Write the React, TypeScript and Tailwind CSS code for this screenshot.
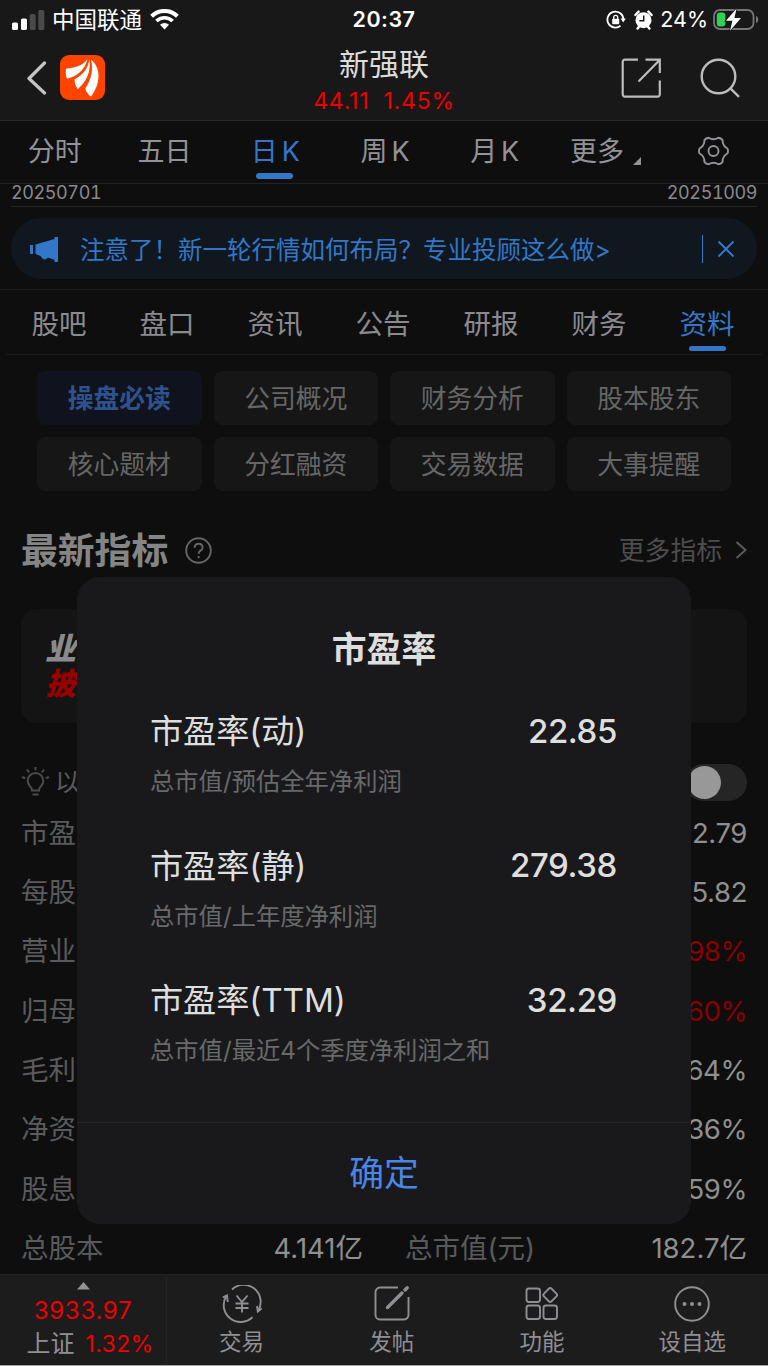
import { useState } from "react";
import clsx from "clsx";

const kTabs = ["分时", "五日", "日K", "周K", "月K"];
const infoTabs = ["股吧", "盘口", "资讯", "公告", "研报", "财务", "资料"];
const chips = [
  "操盘必读", "公司概况", "财务分析", "股本股东",
  "核心题材", "分红融资", "交易数据", "大事提醒",
];

const metrics = [
  { label: "市盈率", value: "2.79" },
  { label: "每股", value: "5.82" },
  { label: "营业", value: "98%", up: true },
  { label: "归母", value: "60%", up: true },
  { label: "毛利", value: "64%" },
  { label: "净资", value: "36%" },
  { label: "股息", value: "59%" },
];

const ratios = [
  { name: "市盈率(动)", value: "22.85", note: "总市值/预估全年净利润" },
  { name: "市盈率(静)", value: "279.38", note: "总市值/上年度净利润" },
  { name: "市盈率(TTM)", value: "32.29", note: "总市值/最近4个季度净利润之和" },
];

function StatusBar() {
  return (
    <div className="relative flex h-10 items-center justify-between pl-3 pr-[9px] text-white">
      <div className="flex items-center">
        <svg width="33" height="21" viewBox="0 0 33 21">
          <rect x="0" y="12.5" width="6" height="7.5" rx="1.6" fill="#fff" />
          <rect x="9" y="8.5" width="6" height="11.5" rx="1.6" fill="#fff" />
          <rect x="17.7" y="4" width="6" height="16" rx="1.6" fill="#4a4a4a" />
          <rect x="26.3" y="0" width="6" height="20" rx="1.6" fill="#4a4a4a" />
        </svg>
        <span className="ml-[7px] text-[22.5px] leading-none">中国联通</span>
        <svg className="ml-2 mb-0.5" width="29" height="21" viewBox="0 0 29 21" fill="none" stroke="#fff">
          <path d="M1.6 7.2a18.4 18.4 0 0 1 25.8 0" strokeWidth="4" />
          <path d="M6.4 12a11.6 11.6 0 0 1 16.2 0" strokeWidth="3.6" />
          <path d="M10 15.8a6.6 6.6 0 0 1 9 0L14.5 20.4z" fill="#fff" stroke="none" />
        </svg>
      </div>
      <div className="absolute inset-x-0 text-center text-[21.5px] leading-none font-semibold tracking-[0.5px]">20:37</div>
      <div className="flex items-center">
        <svg width="20" height="20" viewBox="0 0 20 20" fill="none" stroke="#fff" strokeWidth="1.8">
          <path d="M17.4 9A8 8 0 1 0 14.5 15.8" />
          <path d="M14.6 8.4h5.2l-2.6 4z" fill="#fff" stroke="none" />
          <rect x="6.2" y="8.8" width="7" height="5.4" rx="0.8" fill="#fff" stroke="none" />
          <path d="M7.7 9V7.4a2 2 0 0 1 4 0V9" strokeWidth="1.3" />
        </svg>
        <svg className="ml-2" width="19" height="20" viewBox="0 0 19 20">
          <path d="M1.4 5 4.6 1.6M17.6 5 14.4 1.6M3.6 18.6l2-2.6M15.4 18.6l-2-2.6" stroke="#fff" strokeWidth="2.4" strokeLinecap="round" />
          <circle cx="9.5" cy="10.2" r="8" fill="#fff" />
          <path d="M9.7 5.4v5.4H5.4" fill="none" stroke="#181818" strokeWidth="1.5" />
        </svg>
        <span className="ml-[7px] text-[21.5px] leading-none">24%</span>
        <svg className="ml-[5px]" width="46" height="24" viewBox="0 0 46 24">
          <rect x="1" y="2" width="39.5" height="19" rx="6" fill="none" stroke="#777" strokeWidth="1.8" />
          <path d="M43 8v7c3-1 3-6 0-7z" fill="#777" />
          <rect x="3.8" y="4.5" width="8.6" height="14" rx="3" fill="#30d158" />
          <path d="M23.6 0.5 13 12.8h6.4L17 22.8 28 10h-6.6z" fill="#fff" stroke="#181818" strokeWidth="1.6" paintOrder="stroke" />
        </svg>
      </div>
    </div>
  );
}

function NavBar() {
  return (
    <div className="flex h-[81px] items-center justify-between border-b border-[#292929] px-[27px]">
      <div className="flex w-[200px] items-center">
        <svg className="mb-1" width="20" height="34" viewBox="0 0 20 34" fill="none" stroke="#c4c4c4" strokeWidth="3.2" strokeLinecap="round" strokeLinejoin="round">
          <path d="M17.5 2 2 17.5 17.5 32" />
        </svg>
        <div className="mb-[5px] ml-[13px] size-[45px] rounded-[9px] bg-[#ff4400]">
          <svg width="45" height="45" viewBox="0 0 45 45" fill="#fff">
            <path d="M27.5 4.2C21.5 11.5 14 12.5 6 13.8C5.5 17 5.7 20.5 7 23.8C16 21.5 24.5 16 27.5 4.2z" />
            <path d="M29.2 4.3C28.5 13 23 20 14.6 24.3C14.5 28 15.5 31 17.8 34.2C26 27 31.5 17 29.2 4.3z" />
            <path d="M31 4.3C33.5 15 31.5 24 25.3 33.5C26 37 28 39.5 31 41.5C40 30 42 14 31 4.3z" />
          </svg>
        </div>
      </div>
      <div className="flex flex-col items-center">
        <div className="mb-[9px] text-[30px] leading-8 text-[#dcdcdc]">新强联</div>
        <div className="flex gap-[14px] text-[23px] leading-6 tracking-[0.8px] text-[#ee0000]">
          <span>44.11</span>
          <span>1.45%</span>
        </div>
      </div>
      <div className="flex w-[200px] items-center justify-end gap-[38px] pb-[3px]">
        <svg width="41" height="41" viewBox="0 0 41 41" fill="none" stroke="#bcbcbc" strokeWidth="2.2">
          <path d="M17 1.7H4A2.2 2.2 0 0 0 1.7 4V36.3A2.2 2.2 0 0 0 4 38.6H36.5A2.2 2.2 0 0 0 38.8 36.3V22.5" />
          <path d="M24.5 1.7H38.8V15M38.4 2.2 17.5 23.5" />
        </svg>
        <svg width="41" height="41" viewBox="0 0 41 41" fill="none" stroke="#bcbcbc" strokeWidth="2.4">
          <circle cx="18.5" cy="18.5" r="16.8" />
          <path d="M30.2 30.2 39 38.8" />
        </svg>
      </div>
    </div>
  );
}

function PeriodTabs() {
  return (
    <div className="grid h-[63px] grid-cols-7 border-b border-[#222] text-[27px] leading-none text-[#929297]">
      {kTabs.map((t) => {
        const active = t === "日K";
        return (
          <div key={t} className={clsx("relative flex items-center justify-center pb-0.5", active && "text-[#3277c8]")}>
            <span className={clsx(t.endsWith("K") && "pl-1.5 tracking-[4px]")}>{t}</span>
            {active && <span className="absolute bottom-[4.5px] h-1.5 w-[37px] rounded-full bg-[#3277c8]" />}
          </div>
        );
      })}
      <div className="flex items-center justify-center pb-0.5 pl-1">
        更多
        <svg className="ml-[9px] mt-[19px]" width="8" height="8" viewBox="0 0 8 8" fill="#929297"><path d="M8 0v8H0z" /></svg>
      </div>
      <div className="flex items-center justify-center pb-[3px]">
        <svg width="31" height="30" viewBox="0 0 31 30" fill="none" stroke="#929297" strokeWidth="1.9" strokeLinejoin="round">
          <path d="M29.5 17.5Q24.4 20.15 24.6 25.9Q23 28 20.4 28.3Q15.5 25.3 10.6 28.3Q8 28 6.4 25.9Q6.6 20.15 1.5 17.5Q.5 15 1.5 12.5Q6.6 9.85 6.4 4.1Q8 2 10.6 1.7Q15.5 4.7 20.4 1.7Q23 2 24.6 4.1Q24.4 9.85 29.5 12.5Q30.5 15 29.5 17.5z" />
          <circle cx="15.5" cy="15" r="5" />
        </svg>
      </div>
    </div>
  );
}

function Banner() {
  return (
    <div className="mx-[11px] mt-[11px] flex h-[61px] items-center rounded-full bg-[#10171f] text-[#3277c8]">
      <svg className="ml-[19px]" width="28" height="26" viewBox="0 0 28 26" fill="#3277c8">
        <path d="M0 9h3v9H0zM5.5 8.5 24.5 3V1H28v25h-3.5v-2L18 21.5q-4 4.5-7.5-1.5l-5-2z" />
      </svg>
      <span className="ml-[22px] flex-1 pt-[3px] text-[24.5px] leading-none">注意了！新一轮行情如何布局？专业投顾这么做&gt;</span>
      <span className="mr-[14px] h-7 w-px bg-[#3277c8]" />
      <svg className="mr-[22px]" width="18" height="18" viewBox="0 0 18 18" stroke="#3277c8" strokeWidth="2">
        <path d="M1.5 1.5l15 15M16.5 1.5l-15 15" />
      </svg>
    </div>
  );
}

function InfoTabs() {
  return (
    <div className="mt-[10px] border-t border-[#1b1b1d]">
      <div className="mx-1.5 grid h-[65px] grid-cols-7 border-b border-[#1b1b1d] text-[27.5px] leading-none text-[#8b8b8f]">
        {infoTabs.map((t) => (
          <div key={t} className={clsx("relative flex items-center justify-center pt-1.5 pr-0.5", t === "资料" && "text-[#3277c8]")}>
            {t}
            {t === "资料" && <span className="absolute bottom-[3px] h-[5px] w-[37px] rounded-full bg-[#3277c8]" />}
          </div>
        ))}
      </div>
    </div>
  );
}

function MetricRows() {
  return (
    <div className="-mb-2 shrink-0 px-[21px] text-[27.5px] leading-none">
      {metrics.map((m) => (
        <div key={m.label} className="flex h-[59.3px] items-center justify-between">
          <span className="text-[#5a5a5c]">{m.label}</span>
          <span className={clsx("tracking-[-0.4px]", m.up ? "text-[#8a0000]" : "text-[#8f8f8f]")}>{m.value}</span>
        </div>
      ))}
      <div className="grid h-[59.3px] grid-cols-2 items-center gap-[42px]">
        <div className="flex justify-between">
          <span className="text-[#5a5a5c]">总股本</span>
          <span className="text-[#8f8f8f]">4.141亿</span>
        </div>
        <div className="flex justify-between">
          <span className="text-[#5a5a5c]">总市值(元)</span>
          <span className="text-[#8f8f8f]">182.7亿</span>
        </div>
      </div>
    </div>
  );
}

function BottomBar() {
  const items = [
    {
      label: "交易",
      icon: (
        <>
          <path d="M10 4.5A17 17 0 0 1 36.3 25.5M30.5 32.3A17 17 0 0 1 4.2 11.2" />
          <path d="M.8 12.3 5 10.5 5.7 17M39.8 23.5 35.8 26.5 35 21" />
          <path d="M14.5 10.5 20 17l5.5-6.5M20 17v10.5M13.5 18.5h13M13.5 23h13" />
        </>
      ),
    },
    {
      label: "发帖",
      icon: (
        <>
          <path d="M26 2.5H8A4.5 4.5 0 0 0 3.5 7V30A4.5 4.5 0 0 0 8 34.5H32A4.5 4.5 0 0 0 36.5 30V12" />
          <path d="M15.5 22.5 30 8M33 5 35.2 2.8" strokeWidth="3.4" strokeLinecap="round" />
        </>
      ),
    },
    {
      label: "功能",
      icon: (
        <>
          <rect x="4.5" y="3.5" width="13.5" height="13.5" rx="2.5" />
          <rect x="4.5" y="20.5" width="13.5" height="13.5" rx="2.5" />
          <rect x="21.5" y="20.5" width="13.5" height="13.5" rx="2.5" />
          <rect x="22.8" y="4.6" width="10.8" height="10.8" rx="2" transform="rotate(45 28.2 10)" />
        </>
      ),
    },
    {
      label: "设自选",
      icon: (
        <>
          <circle cx="20" cy="19" r="16.8" />
          <path d="M12.5 19h.01M20 19h.01M27.5 19h.01" strokeWidth="4" strokeLinecap="round" />
        </>
      ),
    },
  ];

  return (
    <div className="relative flex h-[92px] border-t border-b border-t-[#232323] border-b-[#a5a5a5] bg-[#1c1c1c] text-[#8f8f94]">
      <div className="flex w-[167px] flex-col items-center border-r border-[#232325] pt-[7px]">
        <svg width="13" height="8" viewBox="0 0 13 8" fill="#929297"><path d="M6.5 0 13 7.5H0z" /></svg>
        <div className="mt-2 text-[24px] leading-[26px] tracking-[0.7px] text-[#ee0000]">3933.97</div>
        <div className="mt-[7px] flex items-center gap-[11px] pl-3.5 text-[24px] leading-[26px]">
          上证<span className="text-[23px] tracking-[0.4px] text-[#ee0000]">1.32%</span>
        </div>
      </div>
      {items.map((item) => (
        <div key={item.label} className="flex flex-1 flex-col items-center pt-2.5 pr-px text-[22.5px]">
          <svg width="40" height="38" viewBox="0 0 40 38" fill="none" stroke="#8f8f94" strokeWidth="1.9">
            {item.icon}
          </svg>
          <span className="mt-1.5 leading-[26px]">{item.label}</span>
        </div>
      ))}
    </div>
  );
}

function RatioDialog({ onClose }: { onClose: () => void }) {
  return (
    <div className="absolute left-[77px] top-[577px] flex h-[647px] w-[614px] flex-col rounded-[23px] bg-[#19191b]">
      <h2 className="mt-[54px] text-center text-[34.8px] leading-9 font-bold text-[#dedede]">市盈率</h2>
      <div className="flex-1 px-[73px] pt-[47px]">
        {ratios.map((r) => (
          <div key={r.name} className="h-[134.5px]">
            <div className="flex h-9 items-center justify-between leading-none text-[#dedede]">
              <span className="text-[33.2px] tracking-[-0.1px]">{r.name}</span>
              <span className="pr-px pb-0.5 text-[33px] font-medium tracking-[-0.4px]">{r.value}</span>
            </div>
            <div className="mt-[17px] text-[24.3px] leading-7 text-[#69696a]">{r.note}</div>
          </div>
        ))}
      </div>
      <button onClick={onClose} className="h-[102px] border-t border-[#252527] text-[34.8px] leading-none text-[#4a86e8]">
        确定
      </button>
    </div>
  );
}

export default function App() {
  const [open, setOpen] = useState(true);

  return (
    <div className="relative flex h-[1366px] w-[768px] flex-col overflow-hidden bg-[#0e0e0f] font-['Inter','Noto_Sans_CJK_SC',sans-serif]">
      <div className="bg-[#181818]">
        <StatusBar />
        <NavBar />
      </div>
      <PeriodTabs />

      {/* Chart date range */}
      <div className="mx-[11px] flex h-[23px] justify-between border-b border-[#222] text-[18px] leading-[17px] tracking-[-0.4px] tabular-nums text-[#89898d]">
        <span>20250701</span>
        <span>20251009</span>
      </div>

      <Banner />
      <InfoTabs />

      <div className="ml-[37px] mt-4 grid w-[694px] grid-cols-4 gap-3">
        {chips.map((c, i) => (
          <div
            key={c}
            className={clsx(
              "flex h-[54px] items-center justify-center rounded-lg pt-0.5 text-[25.8px] leading-none",
              i === 0 ? "bg-[#10131d] font-bold text-[#2d528e]" : "bg-[#161617] text-[#666]"
            )}
          >
            {c}
          </div>
        ))}
      </div>

      {/* Section heading */}
      <div className="mt-[37px] flex h-11 items-center px-[21px]">
        <h1 className="pt-0.5 text-[36.8px] leading-none font-bold text-[#858585]">最新指标</h1>
        <svg className="ml-[17px]" width="27" height="27" viewBox="0 0 27 27" fill="none" stroke="#666" strokeWidth="1.9">
          <circle cx="13.5" cy="13.5" r="12.3" />
          <path d="M9.6 10.7q.3-4 4-4t4 3.5q0 2-2.1 3.4-1.9 1.3-1.9 3.2" />
          <path d="M13.6 19v2.2" />
        </svg>
        <span className="ml-auto pt-0.5 text-[25.8px] leading-none text-[#4d4d4e]">更多指标</span>
        <svg className="ml-[13px]" width="12" height="18" viewBox="0 0 12 18" fill="none" stroke="#5a5a5b" strokeWidth="2">
          <path d="M1.5 1l9 8-9 8" />
        </svg>
      </div>

      <div className="mx-[21px] mt-[37px] h-[114px] rounded-2xl bg-[#141415] pl-[24px] pt-[22px] text-[31px] leading-[35px] font-black italic">
        <div className="text-[#8a8a8a]">业</div>
        <div className="text-[#980000]">披</div>
      </div>

      <div className="mt-[41px] mb-[3px] flex h-[37px] items-center px-[21px]">
        <svg className="mb-0.5" width="29" height="30" viewBox="0 0 29 30" fill="none" stroke="#4b4b4c" strokeWidth="2">
          <path d="M11 23.5q0-2.5-2-4.2a7.8 7.8 0 1 1 11 0q-2 1.7-2 4.2zM11.5 27.5h6" />
          <path d="M14.5 0v3.2M6 2.5l2.2 3M23 2.5l-2.2 3M1 10l3.2 1.2M28 10l-3.2 1.2" />
        </svg>
        <span className="ml-[5px] text-[25px] leading-none text-[#5a5a5c]">以</span>
        <span className="ml-auto flex h-[37px] w-[62px] items-center rounded-full bg-[#252526] pl-[3px]">
          <span className="size-[33px] rounded-full bg-[#989898]" />
        </span>
      </div>

      <MetricRows />
      <div className="mt-auto">
        <BottomBar />
      </div>

      {open && <RatioDialog onClose={() => setOpen(false)} />}
    </div>
  );
}
